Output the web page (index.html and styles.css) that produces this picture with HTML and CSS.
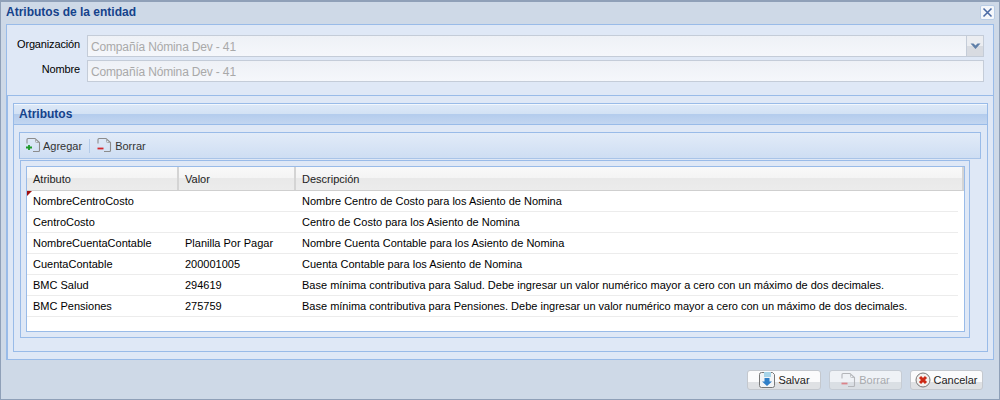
FILE: index.html
```html
<!DOCTYPE html>
<html lang="es">
<head>
<meta charset="utf-8">
<title>Atributos de la entidad</title>
<link rel="stylesheet" href="styles.css">
</head>
<body>
<div class="win">
  <div class="win-head">
    <span class="win-title">Atributos de la entidad</span>
    <button class="win-close" aria-label="Cerrar">
      <svg width="11" height="11" viewBox="0 0 11 11"><path d="M1.5 1.5 9.5 9.5M9.5 1.5 1.5 9.5" stroke="#4a6aa5" stroke-width="1.6" fill="none"/></svg>
    </button>
  </div>
  <div class="win-body">
    <div class="form">
      <div class="form-row">
        <label class="form-label">Organización</label>
        <div class="field">
          <span class="field-text">Compañía Nómina Dev - 41</span>
          <span class="trigger"><svg width="11" height="7" viewBox="0 0 11 7"><path d="M0.5 0.5H3.5L5.5 2.5 7.5 0.5H10.5L5.5 6Z" fill="#5f7fa8"/></svg></span>
        </div>
      </div>
      <div class="form-row">
        <label class="form-label">Nombre</label>
        <div class="field">
          <span class="field-text">Compañía Nómina Dev - 41</span>
        </div>
      </div>
    </div>
    <div class="section">
      <div class="panel">
        <div class="panel-head">Atributos</div>
        <div class="panel-body">
          <div class="toolbar">
            <span class="tool">
              <svg class="ico" width="16" height="17" viewBox="-1 0 16 17"><path d="M1 6.5V2.5Q1 1.5 2 1.5H9L13.5 5.5V13.5Q13.5 14.5 12.5 14.5H7" fill="none" stroke="#8c8c8c" stroke-width="1.1"/><path d="M9.5 2V4.5Q9.5 5.5 10.5 5.5H13" fill="none" stroke="#a8a8a8"/><path d="M0 10.5H6M3 8V13" stroke="#1f9a2a" stroke-width="1.8" fill="none"/></svg>
              Agregar
            </span>
            <span class="tool-sep"></span>
            <span class="tool">
              <svg class="ico" width="16" height="17" viewBox="0 0 16 17"><path d="M1 6.5V2.5Q1 1.5 2 1.5H9L13.5 5.5V13.5Q13.5 14.5 12.5 14.5H7" fill="none" stroke="#8c8c8c" stroke-width="1.1"/><path d="M9.5 2V4.5Q9.5 5.5 10.5 5.5H13" fill="none" stroke="#a8a8a8"/><path d="M0.5 11.5H6.5" stroke="#d4262c" stroke-width="1.8" fill="none"/></svg>
              Borrar
            </span>
          </div>
          <div class="grid-frame">
            <div class="grid">
              <div class="grid-head">
                <div class="hcell c1">Atributo</div>
                <div class="hcell c2">Valor</div>
                <div class="hcell c3">Descripción</div>
              </div>
              <div class="row dirty">
                <div class="cell c1">NombreCentroCosto</div><div class="cell c2"></div><div class="cell c3">Nombre Centro de Costo para los Asiento de Nomina</div>
              </div>
              <div class="row">
                <div class="cell c1">CentroCosto</div><div class="cell c2"></div><div class="cell c3">Centro de Costo para los Asiento de Nomina</div>
              </div>
              <div class="row">
                <div class="cell c1">NombreCuentaContable</div><div class="cell c2">Planilla Por Pagar</div><div class="cell c3">Nombre Cuenta Contable para los Asiento de Nomina</div>
              </div>
              <div class="row">
                <div class="cell c1">CuentaContable</div><div class="cell c2">200001005</div><div class="cell c3">Cuenta Contable para los Asiento de Nomina</div>
              </div>
              <div class="row">
                <div class="cell c1">BMC Salud</div><div class="cell c2">294619</div><div class="cell c3">Base mínima contributiva para Salud. Debe ingresar un valor numérico mayor a cero con un máximo de dos decimales.</div>
              </div>
              <div class="row">
                <div class="cell c1">BMC Pensiones</div><div class="cell c2">275759</div><div class="cell c3">Base mínima contributiva para Pensiones. Debe ingresar un valor numérico mayor a cero con un máximo de dos decimales.</div>
              </div>
            </div>
          </div>
        </div>
      </div>
    </div>
  </div>
  <div class="win-foot">
    <button class="btn btn-save">
      <svg width="18" height="18" viewBox="0 0 18 18"><path d="M3.5 1.5H14.5L16.5 3.5V14.5Q16.5 16.5 14.5 16.5H3.5Q1.5 16.5 1.5 14.5V3.5Q1.5 1.5 3.5 1.5Z" fill="#f2f4f6" stroke="#777" stroke-width="1"/><rect x="6" y="1" width="7" height="5" fill="#a8d4e8"/><path d="M6.5 7H11.5V10.5H14L9 15 4 10.5H6.5Z" fill="#2f7fc8"/></svg>
      Salvar
    </button>
    <button class="btn btn-off">
      <svg width="16" height="17" viewBox="0 0 16 17"><path d="M1 6.5V2.5Q1 1.5 2 1.5H9L13.5 5.5V13.5Q13.5 14.5 12.5 14.5H7" fill="none" stroke="#aaa" stroke-width="1.1"/><path d="M9.5 2V4.5Q9.5 5.5 10.5 5.5H13" fill="none" stroke="#bbb"/><path d="M0.5 11.5H6.5" stroke="#e0686c" stroke-width="1.8" fill="none"/></svg>
      Borrar
    </button>
    <button class="btn">
      <svg width="16" height="16" viewBox="0 0 16 16"><circle cx="8" cy="8" r="7" fill="#f4f1ee" stroke="#777"/><path d="M5 5 11 11M11 5 5 11" stroke="#cc2a16" stroke-width="3" fill="none"/></svg>
      Cancelar
    </button>
  </div>
</div>
</body>
</html>
```

FILE: styles.css
```css
* { box-sizing: border-box; }
html, body { margin: 0; padding: 0; }
body { width: 1000px; height: 400px; overflow: hidden; font-family: "Liberation Sans", Arial, sans-serif; font-size: 11px; color: #000; }

.win { width: 1000px; height: 400px; background: #ced9e7; border: 1px solid #8fa0b8; border-top-width: 2px; padding: 0 5px; display: flex; flex-direction: column; }
.win-head { height: 22px; flex: none; display: flex; align-items: center; justify-content: space-between; padding-bottom: 2px; }
.win-title { font-weight: bold; font-size: 12px; color: #15428b; }
.win-close { width: 15px; height: 15px; padding: 0; margin-right: -1px; border: 1px solid #b9cde6; border-radius: 2px; background: #f4f7fb; display: flex; align-items: center; justify-content: center; }

.win-body { height: 336px; flex: none; border: 1px solid #99bbe8; background: #dfe8f6; display: flex; flex-direction: column; }
.form { height: 70px; flex: none; padding-top: 10px; display: flex; flex-direction: column; gap: 3px; }
.form-row { display: flex; align-items: center; height: 22px; padding-right: 9px; }
.form-label { width: 73px; text-align: right; margin-right: 7px; font-size: 11px; margin-top: -4px; letter-spacing: -0.15px; }
.field { flex: 1; height: 22px; border: 1px solid #c4ccd8; background: linear-gradient(#eef1f6, #f5f7fb); display: flex; align-items: center; }
.field-text { flex: 1; padding: 1px 0 0 3px; color: #a9a9a9; font-size: 12px; letter-spacing: -0.16px; }
.trigger { width: 17px; height: 20px; border-left: 1px solid #c4ccd8; background: linear-gradient(#ebedf1 50%, #d8dbe1 50%); display: flex; align-items: center; justify-content: center; }

.section { flex: 1; border-top: 1px solid #99bbe8; border-left: 1px solid #99bbe8; padding: 7px 5px 7px 5px; }
.panel { height: 249px; border: 1px solid #99bbe8; background: #dfe8f6; display: flex; flex-direction: column; }
.panel-head { height: 21px; flex: none; padding-left: 5px; line-height: 19px; font-weight: bold; font-size: 12px; color: #15428b; background: linear-gradient(#dce8f7 0, #d2e1f4 50%, #b4cced 50%, #c3d6f0 100%); border-bottom: 1px solid #99bbe8; border-top: 1px solid #f2f7fd; }
.panel-body { flex: 1; padding: 7px 0 0 5px; display: flex; flex-direction: column; }

.toolbar { height: 27px; width: 962px; flex: none; border: 1px solid #99bbe8; border-bottom-color: #a9c4e8; background: linear-gradient(#e2ebf8, #cedef3); display: flex; align-items: center; padding-left: 5px; gap: 5px; color: #333; }
.tool { display: flex; align-items: center; gap: 2px; }
.ico { flex: none; }
.tool-sep { width: 1px; height: 14px; background: #b4cbe9; margin: 0 2px; }

.grid-frame { width: 950px; height: 178px; margin: 1px 0 0 1px; border: 1px solid #99bbe8; padding: 5px; }
.grid { height: 166px; width: 939px; border: 1px solid #99bbe8; background: #fff; }
.grid-head { height: 24px; width: 937px; display: flex; background: linear-gradient(#f9f9f9 0, #f4f4f4 50%, #e9e9e9 50%, #ececec 100%); border-bottom: 1px solid #cfcfcf; }
.hcell { line-height: 23px; padding: 1px 0 0 6px; border-right: 2px solid #d4d4d4; color: #222; }
.hcell.c1 { width: 152px; }
.hcell.c2 { width: 117px; }
.hcell.c3 { flex: 1; }
.row { display: flex; height: 21px; width: 931px; border-bottom: 1px solid #ececec; position: relative; line-height: 20px; }
.cell { padding-left: 6px; white-space: nowrap; }
.cell.c1 { width: 152px; }
.cell.c2 { width: 117px; }
.cell.c3 { flex: 1; }
.dirty::before { content: ""; position: absolute; left: 0; top: 0; border-style: solid; border-width: 5px 5px 0 0; border-color: #a01010 transparent transparent transparent; }

.win-foot { flex: 1; display: flex; justify-content: flex-end; align-items: flex-start; padding: 10px 11px 0 0; gap: 8px; }
.btn { width: 73px; height: 20px; padding: 0; border: 1px solid #c4c8ce; border-radius: 3px; background: linear-gradient(#fbfbfc 60%, #dfe1e4 60%); display: flex; align-items: center; justify-content: center; gap: 2px; font: 11px "Liberation Sans", Arial, sans-serif; color: #222; }
.btn-save { width: 74px; }
.btn-off { color: #9a9a9a; opacity: .75; }
```
